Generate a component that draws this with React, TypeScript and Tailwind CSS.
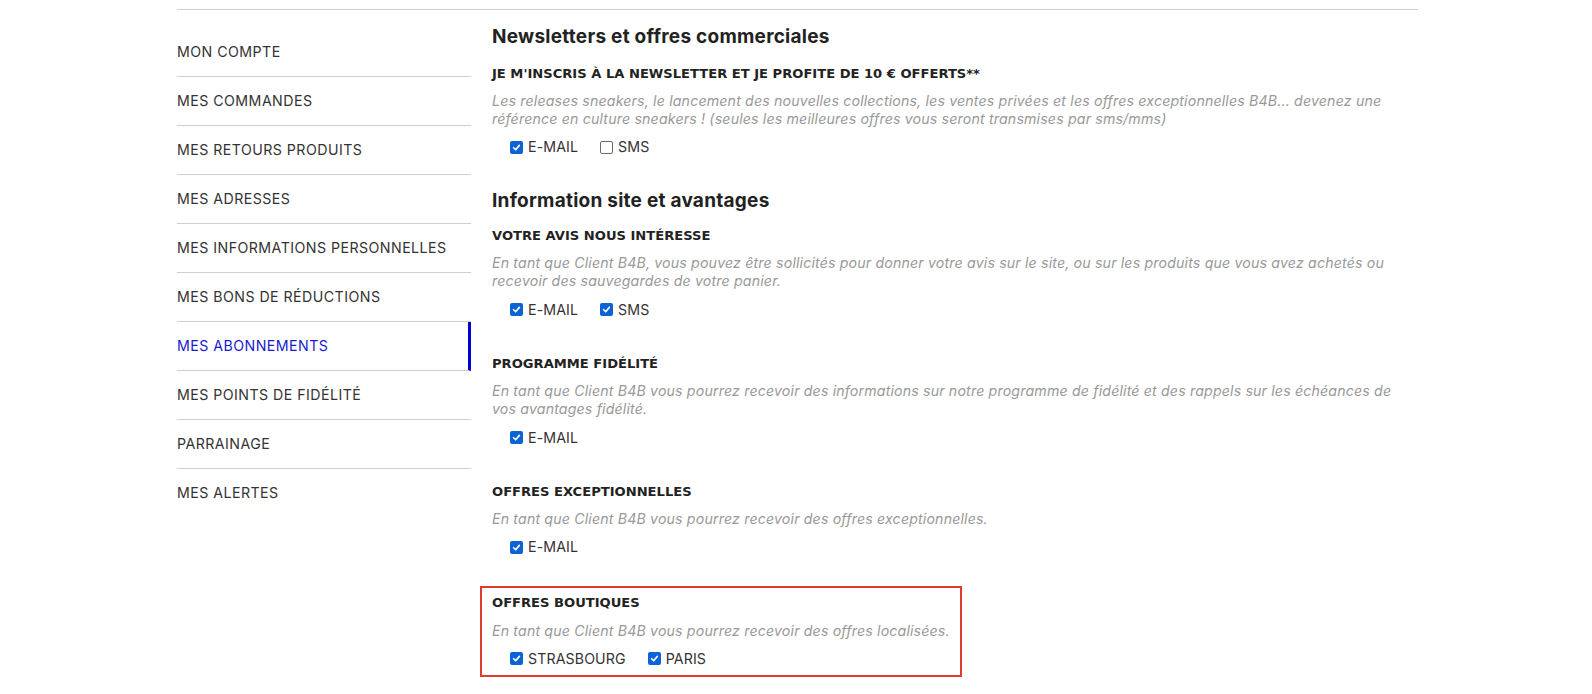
import React from 'react';

const MENU = [
  'Mon compte',
  'Mes commandes',
  'Mes retours produits',
  'Mes adresses',
  'Mes informations personnelles',
  'Mes bons de réductions',
  'Mes abonnements',
  'Mes points de fidélité',
  'Parrainage',
  'Mes alertes',
];

const ACTIVE = 'Mes abonnements';

const Check: React.FC<{ label: string; checked?: boolean }> = ({ label, checked = true }) => (
  <label className="flex items-center gap-[5px] text-[14.2px] uppercase tracking-[0.1px] text-[#333]">
    {checked ? (
      <span className="flex h-[13px] w-[13px] items-center justify-center rounded-[2px] bg-[#0b63d6]">
        <svg width="9" height="9" viewBox="0 0 12 12" fill="none" stroke="white" strokeWidth="2.2" strokeLinecap="round" strokeLinejoin="round">
          <polyline points="2.2 6.3 4.9 9 9.8 3.2" />
        </svg>
      </span>
    ) : (
      <span className="h-[13px] w-[13px] rounded-[2px] border border-[#6b6b6b] bg-white" />
    )}
    {label}
  </label>
);

interface Option {
  title: string;
  text: string;
  checks: { label: string; checked?: boolean }[];
}

const Block: React.FC<Option> = ({ title, text, checks }) => (
  <div>
    <h3
      className="text-[13.1px] font-bold uppercase leading-[18px] text-[#222]"
      style={{ fontFamily: '"DejaVu Sans", Inter, sans-serif' }}
    >
      {title}
    </h3>
    <p className="mt-[9.5px] w-[915px] text-[14.2px] italic leading-[18.3px] tracking-[0.15px] text-[#999]">{text}</p>
    <div className="mt-[8.5px] flex h-[20px] items-center gap-[22px] pl-[18px]">
      {checks.map(c => (
        <Check key={c.label} label={c.label} checked={c.checked} />
      ))}
    </div>
  </div>
);

export default function App() {
  return (
    <div className="bg-white pt-[9px]" style={{ fontFamily: 'Inter, "DejaVu Sans", sans-serif' }}>
      <div className="ml-[177px] w-[1241px] border-t border-[#cfcfcf]">
        <div className="flex gap-[21px]">
          <nav className="w-[294px] shrink-0 pt-[18px]">
            {MENU.map((item, i) => {
              const active = item === ACTIVE;
              return (
                <div
                  key={item}
                  className={`flex h-[49px] items-center text-[14.2px] uppercase tracking-[0.45px] ${
                    i < MENU.length - 1 ? 'border-b border-[#cfcfcf]' : 'pb-[2px]'
                  } ${active ? 'border-r-[3px] border-r-[#0000d0] text-[#1a1ad1]' : 'text-[#333]'}`}
                >
                  {item}
                </div>
              );
            })}
          </nav>

          <main className="flex-1 pt-[15px]">
            <h2 className="text-[19px] font-bold leading-[24px] tracking-[0.25px] text-[#222]">
              Newsletters et offres commerciales
            </h2>
            <div className="mt-[15.5px]">
              <Block
                title="Je m'inscris à la newsletter et je profite de 10 € offerts**"
                text="Les releases sneakers, le lancement des nouvelles collections, les ventes privées et les offres exceptionnelles B4B... devenez une référence en culture sneakers ! (seules les meilleures offres vous seront transmises par sms/mms)"
                checks={[{ label: 'E-mail' }, { label: 'SMS', checked: false }]}
              />
            </div>

            <h2 className="mt-[31.5px] text-[19px] font-bold leading-[24px] tracking-[0.25px] text-[#222]">
              Information site et avantages
            </h2>
            <div className="mt-[14px] flex flex-col gap-[35.5px]">
              <Block
                title="Votre avis nous intéresse"
                text="En tant que Client B4B, vous pouvez être sollicités pour donner votre avis sur le site, ou sur les produits que vous avez achetés ou recevoir des sauvegardes de votre panier."
                checks={[{ label: 'E-mail' }, { label: 'SMS' }]}
              />
              <Block
                title="Programme fidélité"
                text="En tant que Client B4B vous pourrez recevoir des informations sur notre programme de fidélité et des rappels sur les échéances de vos avantages fidélité."
                checks={[{ label: 'E-mail' }]}
              />
              <Block
                title="Offres exceptionnelles"
                text="En tant que Client B4B vous pourrez recevoir des offres exceptionnelles."
                checks={[{ label: 'E-mail' }]}
              />
            </div>

            <div className="-ml-[12px] mt-[29px] w-[482px] border-2 border-[#e23a2b] pl-[10px] pr-[8px] pt-[6px] pb-[7px]">
              <Block
                title="Offres boutiques"
                text="En tant que Client B4B vous pourrez recevoir des offres localisées."
                checks={[{ label: 'Strasbourg' }, { label: 'Paris' }]}
              />
            </div>
          </main>
        </div>
      </div>
    </div>
  );
}
